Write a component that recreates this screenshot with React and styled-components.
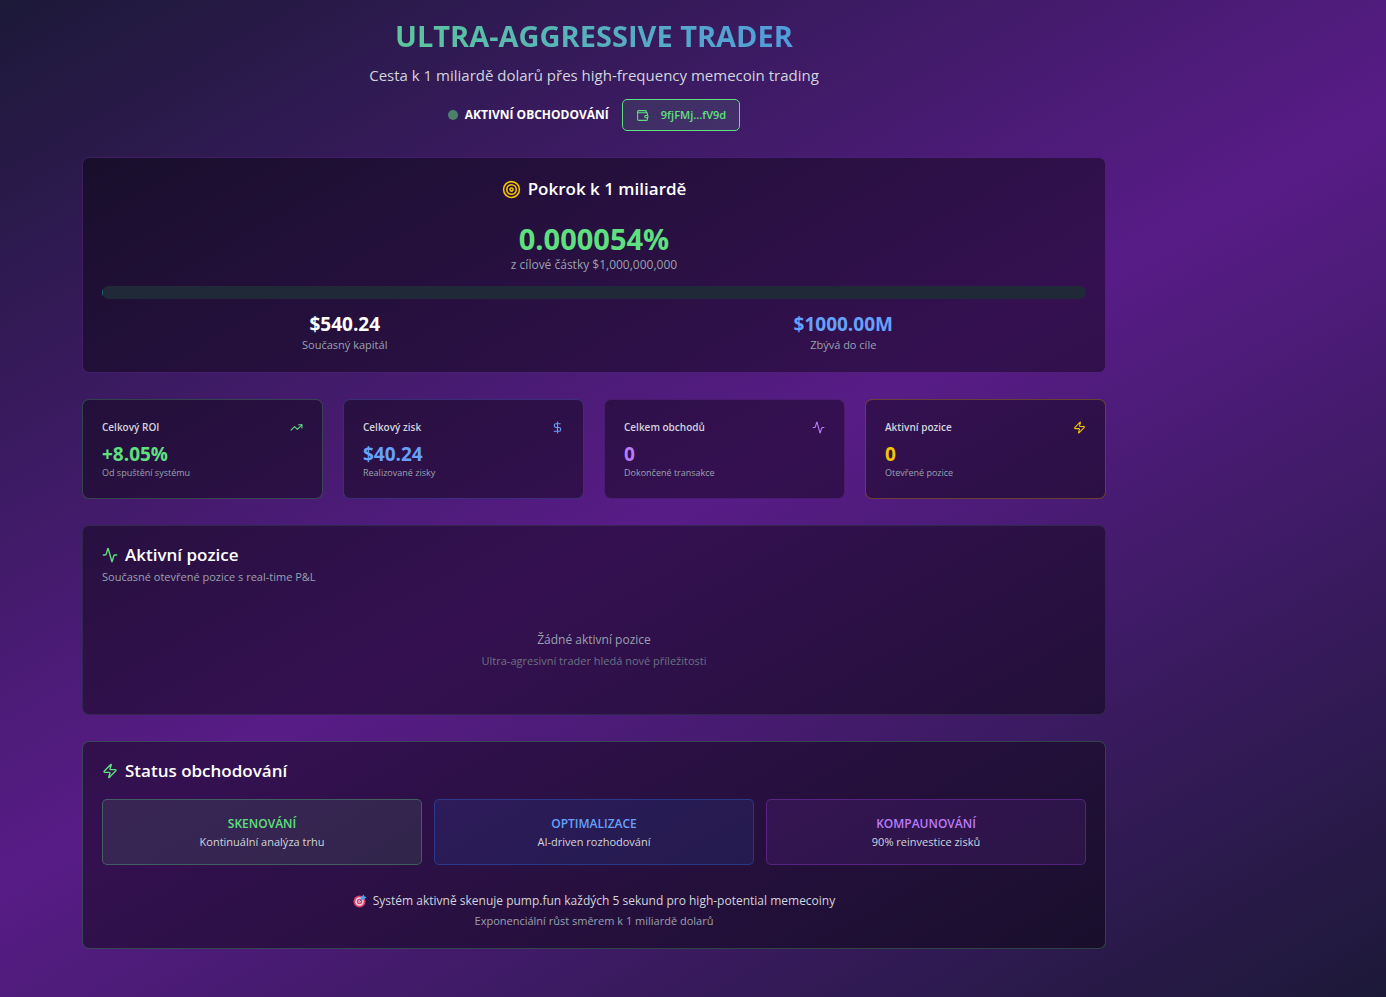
import React from 'react';
import styled, { createGlobalStyle } from 'styled-components';
import { Activity, DollarSign, Target, TrendingUp, Wallet, Zap } from 'lucide-react';

const green = '#5fe07f';
const blue = '#66a1fb';
const purple = '#b97cfa';
const yellow = '#f5c400';

const Global = createGlobalStyle`
  *, *::before, *::after { box-sizing: border-box; }
  body { margin: 0; font-family: "Segoe UI", "Open Sans", "Noto Sans", sans-serif; color: #fff; }
  h1, h2, h3, p { margin: 0; }
`;

const Page = styled.div`
  min-height: 100vh;
  display: grid;
  grid-template-columns: 6fr 1fr;
  background: linear-gradient(151deg, #1c1938 0%, #581c87 50%, #1c1938 100%);
`;

const Content = styled.main`
  width: 100%;
  max-width: 1064px;
  margin: 0 auto;
  padding: 20px 20px 48px;
  display: flex;
  flex-direction: column;
  gap: 26px;
`;

const Header = styled.header`
  display: flex;
  flex-direction: column;
  align-items: center;
  text-align: center;
`;

const Title = styled.h1`
  font-size: 29px;
  line-height: 32px;
  font-weight: 700;
  color: transparent;
  background: linear-gradient(90deg, #5cc69d, #529bdc);
  background-clip: text;
`;

const Subtitle = styled.p`
  margin-top: 11px;
  font-size: 15px;
  line-height: 24px;
  color: #d1d5dc;
`;

const StatusLine = styled.div`
  margin-top: 12px;
  display: flex;
  align-items: center;
  gap: 13px;
`;

const LiveLabel = styled.span`
  display: flex;
  align-items: center;
  gap: 7px;
  font-size: 12px;
  line-height: 20px;
  font-weight: 700;
`;

const Dot = styled.i`
  width: 10px;
  height: 10px;
  border-radius: 50%;
  background: #4d806c;
`;

const WalletButton = styled.button`
  height: 32px;
  padding: 0 13px;
  display: flex;
  align-items: center;
  gap: 12px;
  border: 1px solid ${green};
  border-radius: 5px;
  background: rgba(95, 224, 127, 0.1);
  color: ${green};
  font-family: inherit;
  font-size: 11px;
  line-height: 16px;
  font-weight: 600;
`;

const Panel = styled.section`
  padding: 19px;
  border: 1px solid ${(p) => p.$line};
  border-radius: 7px;
  background: rgba(0, 0, 0, 0.4);
`;

const Heading = styled.h2`
  display: flex;
  align-items: center;
  justify-content: ${(p) => (p.$center ? 'center' : 'flex-start')};
  gap: 7px;
  padding-bottom: ${(p) => (p.$center ? '0' : '4px')};
  font-size: 17px;
  line-height: ${(p) => (p.$center ? '24px' : '20px')};
  font-weight: 600;
`;

const Centered = styled.div`
  text-align: center;
`;

const Percent = styled.p`
  margin-top: 20px;
  font-size: 29px;
  line-height: 36px;
  font-weight: 700;
  color: ${green};
`;

const Note = styled.p`
  font-size: 12px;
  line-height: 16px;
  color: #99a1af;
`;

const Small = styled.p`
  font-size: 11px;
  line-height: 16px;
  color: ${(p) => p.$color || '#99a1af'};
`;

const Track = styled.div`
  margin: 13px 0;
  height: 13px;
  border-radius: 7px;
  overflow: hidden;
  background: #1f2937;
`;

const Fill = styled.div`
  height: 100%;
  min-width: 1px;
  background: #2b6a83;
`;

const Halves = styled.div`
  display: grid;
  grid-template-columns: 1fr 1fr;
  gap: 13px;
  text-align: center;
`;

const Value = styled.p`
  font-size: 19px;
  line-height: 25px;
  font-weight: 700;
  color: ${(p) => p.$color || '#fff'};
`;

const Stats = styled.div`
  display: grid;
  grid-template-columns: repeat(4, 1fr);
  gap: 20px;
`;

const StatHead = styled.div`
  display: flex;
  align-items: center;
  justify-content: space-between;
  margin-bottom: 7px;
`;

const StatTitle = styled.h3`
  font-size: 10px;
  line-height: 16px;
  font-weight: 600;
  color: #d1d5dc;
`;

const StatNote = styled.p`
  font-size: 9px;
  line-height: 12px;
  color: #99a1af;
`;

const Empty = styled.div`
  display: grid;
  gap: 5px;
  padding: 47px 0 26px;
  text-align: center;
`;

const Modes = styled.div`
  display: grid;
  grid-template-columns: repeat(3, 1fr);
  gap: 12px;
  margin-top: 14px;
`;

const Mode = styled.div`
  padding: 14px 12px;
  border: 1px solid rgba(${(p) => p.$rgb}, 0.3);
  border-radius: 5px;
  background: rgba(${(p) => p.$rgb}, 0.1);
  text-align: center;
`;

const ModeTitle = styled.h3`
  font-size: 12px;
  line-height: 20px;
  font-weight: 600;
  color: ${(p) => p.$color};
`;

const Footer = styled.div`
  display: grid;
  gap: 2px;
  padding-top: 26px;
  text-align: center;
`;

const Message = styled.p`
  display: flex;
  align-items: center;
  justify-content: center;
  gap: 6px;
  font-size: 12px;
  line-height: 20px;
  color: #d1d5dc;
`;

function Dart() {
  return (
    <svg width="14" height="14" viewBox="0 0 28 28" aria-hidden="true">
      <circle cx="13" cy="15" r="12" fill="#dc3f67" />
      <circle cx="13" cy="15" r="8.5" fill="#e9d9e8" />
      <circle cx="13" cy="15" r="5.5" fill="#dc3f67" />
      <circle cx="13" cy="15" r="2.5" fill="#e9d9e8" />
      <path d="M13 15 21 7" stroke="#35609c" strokeWidth="2" />
      <path d="m15 8 6-7 2 4 4 1-6 6-5 0z" fill="#4aa5ee" />
    </svg>
  );
}

const stats = [
  { title: 'Celkový ROI', value: '+8.05%', note: 'Od spuštění systému', color: green, line: 'rgba(95,224,127,.25)', Icon: TrendingUp },
  { title: 'Celkový zisk', value: '$40.24', note: 'Realizované zisky', color: blue, line: 'rgba(81,120,235,.3)', Icon: DollarSign },
  { title: 'Celkem obchodů', value: '0', note: 'Dokončené transakce', color: purple, line: 'rgba(173,70,255,.2)', Icon: Activity },
  { title: 'Aktivní pozice', value: '0', note: 'Otevřené pozice', color: yellow, line: 'rgba(240,177,0,.3)', Icon: Zap },
];

const modes = [
  { title: 'SKENOVÁNÍ', note: 'Kontinuální analýza trhu', color: green, rgb: '95, 224, 127' },
  { title: 'OPTIMALIZACE', note: 'AI-driven rozhodování', color: blue, rgb: '43, 127, 255' },
  { title: 'KOMPAUNOVÁNÍ', note: '90% reinvestice zisků', color: purple, rgb: '173, 70, 255' },
];

export default function App() {
  return (
    <Page>
      <Global />
      <Content>
        <Header>
          <Title>ULTRA-AGGRESSIVE TRADER</Title>
          <Subtitle>Cesta k 1 miliardě dolarů přes high-frequency memecoin trading</Subtitle>
          <StatusLine>
            <LiveLabel><Dot />AKTIVNÍ OBCHODOVÁNÍ</LiveLabel>
            <WalletButton type="button"><Wallet size={13} />9fjFMj...fV9d</WalletButton>
          </StatusLine>
        </Header>

        <Panel $line="rgba(173,70,255,.25)">
          <Heading $center><Target size={19} color={yellow} />Pokrok k 1 miliardě</Heading>
          <Centered>
            <Percent>0.000054%</Percent>
            <Note>z cílové částky $1,000,000,000</Note>
          </Centered>
          <Track><Fill style={{ width: '0.000054%' }} /></Track>
          <Halves>
            <div>
              <Value>$540.24</Value>
              <Small>Současný kapitál</Small>
            </div>
            <div>
              <Value $color={blue}>$1000.00M</Value>
              <Small>Zbývá do cíle</Small>
            </div>
          </Halves>
        </Panel>

        <Stats>
          {stats.map(({ title, value, note, color, line, Icon }) => (
            <Panel key={title} $line={line}>
              <StatHead>
                <StatTitle>{title}</StatTitle>
                <Icon size={13} color={color} />
              </StatHead>
              <Value $color={color}>{value}</Value>
              <StatNote>{note}</StatNote>
            </Panel>
          ))}
        </Stats>

        <Panel $line="rgba(54,65,83,.5)">
          <Heading><Activity size={16} color={green} />Aktivní pozice</Heading>
          <Small>Současné otevřené pozice s real-time P&amp;L</Small>
          <Empty>
            <Note>Žádné aktivní pozice</Note>
            <Small $color="#6a7282">Ultra-agresivní trader hledá nové příležitosti</Small>
          </Empty>
        </Panel>

        <Panel $line="rgba(95,224,127,.25)">
          <Heading><Zap size={16} color={green} />Status obchodování</Heading>
          <Modes>
            {modes.map((m) => (
              <Mode key={m.title} $rgb={m.rgb}>
                <ModeTitle $color={m.color}>{m.title}</ModeTitle>
                <Small $color="#d1d5dc">{m.note}</Small>
              </Mode>
            ))}
          </Modes>
          <Footer>
            <Message><Dart />Systém aktivně skenuje pump.fun každých 5 sekund pro high-potential memecoiny</Message>
            <Small>Exponenciální růst směrem k 1 miliardě dolarů</Small>
          </Footer>
        </Panel>
      </Content>
    </Page>
  );
}
